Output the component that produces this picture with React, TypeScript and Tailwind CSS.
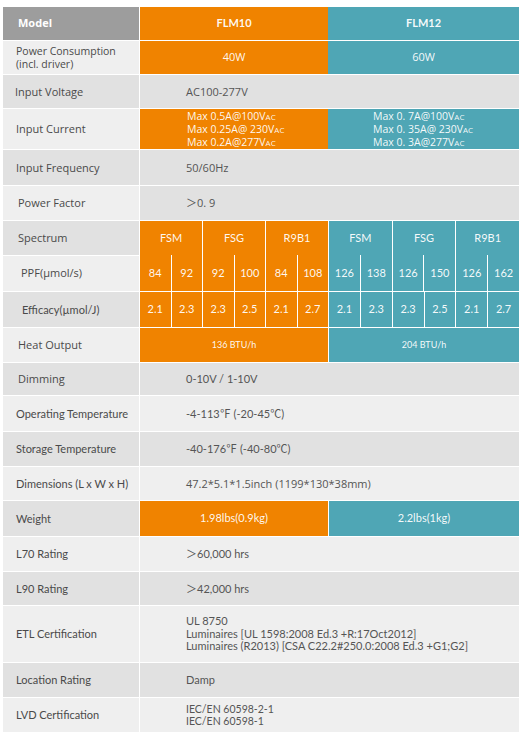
import React from "react";

const OS = "font-['Open_Sans','Noto_Sans_CJK_SC',sans-serif]";
const LT = "font-['Lato','Noto_Sans_CJK_SC',sans-serif]";

const LIGHT = "bg-[#efefef]";
const DARK = "bg-[#e1e1e1]";
const OR = "bg-[#f08300]";
const TE = "bg-[#4fa6b5]";

function Label({
  children,
  bg,
  font,
  pad = "pl-[13px]",
}: {
  children: React.ReactNode;
  bg: string;
  font: string;
  pad?: string;
}) {
  return (
    <div className={`w-[136px] shrink-0 ${bg} ${font} ${pad} flex items-center text-[11px] leading-[12px] text-[#4a4a4a]`}>
      <div>{children}</div>
    </div>
  );
}

function GrayRow({
  h,
  label,
  lbg,
  lfont,
  lpad,
  vbg,
  vfont,
  children,
}: {
  h: string;
  label: React.ReactNode;
  lbg: string;
  lfont: string;
  lpad?: string;
  vbg: string;
  vfont: string;
  children: React.ReactNode;
}) {
  return (
    <div className={`flex gap-px ${h}`}>
      <Label bg={lbg} font={lfont} pad={lpad}>
        {label}
      </Label>
      <div className={`flex-1 ${vbg} ${vfont} flex items-center pl-[46px] text-[11px] leading-[12px] text-[#555555]`}>
        <div>{children}</div>
      </div>
    </div>
  );
}

function Vac() {
  return <span className="text-[8px]">AC</span>;
}

export default function App() {
  const ppfO = [
    ["84", "92"],
    ["92", "100"],
    ["84", "108"],
  ];
  const ppfT = [
    ["126", "138"],
    ["126", "150"],
    ["126", "162"],
  ];
  const effO = ["2.1", "2.3", "2.3", "2.5", "2.1", "2.7"];
  const effT = ["2.1", "2.3", "2.3", "2.5", "2.1", "2.7"];

  return (
    <div className="w-[527px] h-[739px] bg-white pt-[7px] pl-[3px]">
      <div className="flex w-[516px] flex-col gap-px">
        {/* Header */}
        <div className="flex h-[33px] gap-px">
          <div className={`w-[136px] shrink-0 bg-[#9d9d9d] ${OS} flex items-center pl-[15px] text-[11px] font-bold text-white`}>
            Model
          </div>
          <div className="flex flex-1">
            <div className={`w-[188px] ${OR} ${LT} flex items-center justify-center text-[11px] font-bold text-white/95`}>
              FLM10
            </div>
            <div className={`flex-1 ${TE} ${LT} flex items-center justify-center text-[11px] font-bold text-white/95`}>
              FLM12
            </div>
          </div>
        </div>

        {/* Power consumption */}
        <div className="flex h-[33px] gap-px">
          <Label bg={LIGHT} font={OS}>
            <div className="text-[10.5px] leading-[13px]">Power Consumption</div>
            <div className="text-[10.5px] leading-[13px]">(incl. driver)</div>
          </Label>
          <div className={`flex flex-1 ${OS} text-[11px] text-white/95`}>
            <div className={`w-[188px] ${OR} flex items-center justify-center`}>40W</div>
            <div className={`flex-1 ${TE} flex items-center justify-center`}>60W</div>
          </div>
        </div>

        <GrayRow h="h-[33px]" label="Input Voltage" lbg={DARK} lfont={OS} lpad="pl-[12px]" vbg={DARK} vfont={OS}>
          AC100-277V
        </GrayRow>

        {/* Input current */}
        <div className="flex h-[40px] gap-px">
          <Label bg={LIGHT} font={OS}>
            Input Current
          </Label>
          <div className={`flex flex-1 ${OS} text-[10.5px] leading-[12px] text-white/95`}>
            <div className={`w-[188px] ${OR} flex items-center pl-[47px]`}>
              <div>
                <div>
                  Max 0.5A@100V<Vac />
                </div>
                <div>
                  Max 0.25A@ 230V<Vac />
                </div>
                <div>
                  Max 0.2A@277V<Vac />
                </div>
              </div>
            </div>
            <div className={`flex-1 ${TE} flex items-center pl-[45px]`}>
              <div>
                <div>
                  Max 0. 7A@100V<Vac />
                </div>
                <div>
                  Max 0. 35A@ 230V<Vac />
                </div>
                <div>
                  Max 0. 3A@277V<Vac />
                </div>
              </div>
            </div>
          </div>
        </div>

        <GrayRow h="h-[35px]" label="Input Frequency" lbg={DARK} lfont={OS} vbg={DARK} vfont={OS}>
          50/60Hz
        </GrayRow>

        <GrayRow h="h-[34px]" label="Power Factor" lbg={LIGHT} lfont={OS} lpad="pl-[15px]" vbg={DARK} vfont={OS}>
          ＞0. 9
        </GrayRow>

        {/* Spectrum + PPF */}
        <div className="flex gap-px">
          <div className="flex w-[136px] shrink-0 flex-col gap-px">
            <div className={`h-[34px] ${DARK} ${OS} flex items-center pl-[15px] text-[11px] text-[#4a4a4a]`}>Spectrum</div>
            <div className={`h-[35px] ${LIGHT} ${OS} flex items-center pl-[18px] text-[11px] text-[#4a4a4a]`}>PPF(µmol/s)</div>
          </div>
          <div className={`flex flex-1 gap-px bg-white ${LT} text-[11px] text-white/95`}>
            <div className="grid w-[188px] grid-cols-3 gap-px bg-white">
              {["FSM", "FSG", "R9B1"].map((s, i) => (
                <div key={s} className="flex flex-col">
                  <div className={`h-[34px] ${OR} flex items-center justify-center`}>{s}</div>
                  <div className="grid h-[36px] grid-cols-2 gap-px bg-white">
                    {ppfO[i].map((v, j) => (
                      <div key={j} className={`${OR} flex items-center justify-center`}>
                        {v}
                      </div>
                    ))}
                  </div>
                </div>
              ))}
            </div>
            <div className="grid flex-1 grid-cols-3 gap-px bg-white">
              {["FSM", "FSG", "R9B1"].map((s, i) => (
                <div key={s} className="flex flex-col">
                  <div className={`h-[34px] ${TE} flex items-center justify-center`}>{s}</div>
                  <div className="grid h-[36px] grid-cols-2 gap-px bg-white">
                    {ppfT[i].map((v, j) => (
                      <div key={j} className={`${TE} flex items-center justify-center`}>
                        {v}
                      </div>
                    ))}
                  </div>
                </div>
              ))}
            </div>
          </div>
        </div>

        {/* Efficacy */}
        <div className="flex h-[35px] gap-px">
          <Label bg={DARK} font={LT} pad="pl-[19px]">
            Efficacy(µmol/J)
          </Label>
          <div className={`flex flex-1 gap-px bg-white ${LT} text-[11px] text-white/95`}>
            <div className="grid w-[188px] grid-cols-6 gap-px bg-white">
              {effO.map((v, i) => (
                <div key={i} className={`${OR} flex items-center justify-center`}>
                  {v}
                </div>
              ))}
            </div>
            <div className="grid flex-1 grid-cols-6 gap-px bg-white">
              {effT.map((v, i) => (
                <div key={i} className={`${TE} flex items-center justify-center`}>
                  {v}
                </div>
              ))}
            </div>
          </div>
        </div>

        {/* Heat output */}
        <div className="flex h-[34px] gap-px">
          <Label bg={LIGHT} font={OS} pad="pl-[15px]">
            Heat Output
          </Label>
          <div className={`flex flex-1 gap-px bg-white ${LT} text-[9px] text-white/95`}>
            <div className={`w-[188px] ${OR} flex items-center justify-center`}>136 BTU/h</div>
            <div className={`flex-1 ${TE} flex items-center justify-center`}>204 BTU/h</div>
          </div>
        </div>

        <GrayRow h="h-[32px]" label="Dimming" lbg={DARK} lfont={OS} lpad="pl-[15px]" vbg={DARK} vfont={LT}>
          0-10V / 1-10V
        </GrayRow>

        <GrayRow h="h-[35px]" label="Operating Temperature" lbg={LIGHT} lfont={LT} vbg={LIGHT} vfont={LT}>
          -4-113℉ (-20-45℃)
        </GrayRow>

        <GrayRow h="h-[34px]" label="Storage Temperature" lbg={DARK} lfont={LT} vbg={DARK} vfont={LT}>
          -40-176℉ (-40-80℃)
        </GrayRow>

        <GrayRow h="h-[33px]" label="Dimensions (L x W x H)" lbg={LIGHT} lfont={LT} vbg={LIGHT} vfont={OS}>
          47.2*5.1*1.5inch (1199*130*38mm)
        </GrayRow>

        {/* Weight */}
        <div className="flex h-[35px] gap-px">
          <Label bg={DARK} font={LT}>
            Weight
          </Label>
          <div className={`flex flex-1 gap-px bg-white ${LT} text-[11px] text-white/95`}>
            <div className={`w-[188px] ${OR} flex items-center justify-center`}>1.98lbs(0.9kg)</div>
            <div className={`flex-1 ${TE} flex items-center justify-center`}>2.2lbs(1kg)</div>
          </div>
        </div>

        <GrayRow h="h-[34px]" label="L70 Rating" lbg={LIGHT} lfont={LT} vbg={LIGHT} vfont={LT}>
          ＞60,000 hrs
        </GrayRow>

        <GrayRow h="h-[33px]" label="L90 Rating" lbg={DARK} lfont={LT} vbg={DARK} vfont={LT}>
          ＞42,000 hrs
        </GrayRow>

        <GrayRow h="h-[56px]" label="ETL Certification" lbg={LIGHT} lfont={LT} vbg={LIGHT} vfont={LT}>
          <div className="leading-[12.5px]">
            <div>UL 8750</div>
            <div>Luminaires [UL 1598:2008 Ed.3 +R:17Oct2012]</div>
            <div>Luminaires (R2013) [CSA C22.2#250.0:2008 Ed.3 +G1;G2]</div>
          </div>
        </GrayRow>

        <GrayRow h="h-[34px]" label="Location Rating" lbg={DARK} lfont={LT} vbg={DARK} vfont={LT}>
          Damp
        </GrayRow>

        <GrayRow h="h-[34px]" label="LVD Certification" lbg={LIGHT} lfont={LT} vbg={LIGHT} vfont={LT}>
          <div className="text-[10.5px] leading-[12px]">
            <div>IEC/EN 60598-2-1</div>
            <div>IEC/EN 60598-1</div>
          </div>
        </GrayRow>
      </div>
    </div>
  );
}
